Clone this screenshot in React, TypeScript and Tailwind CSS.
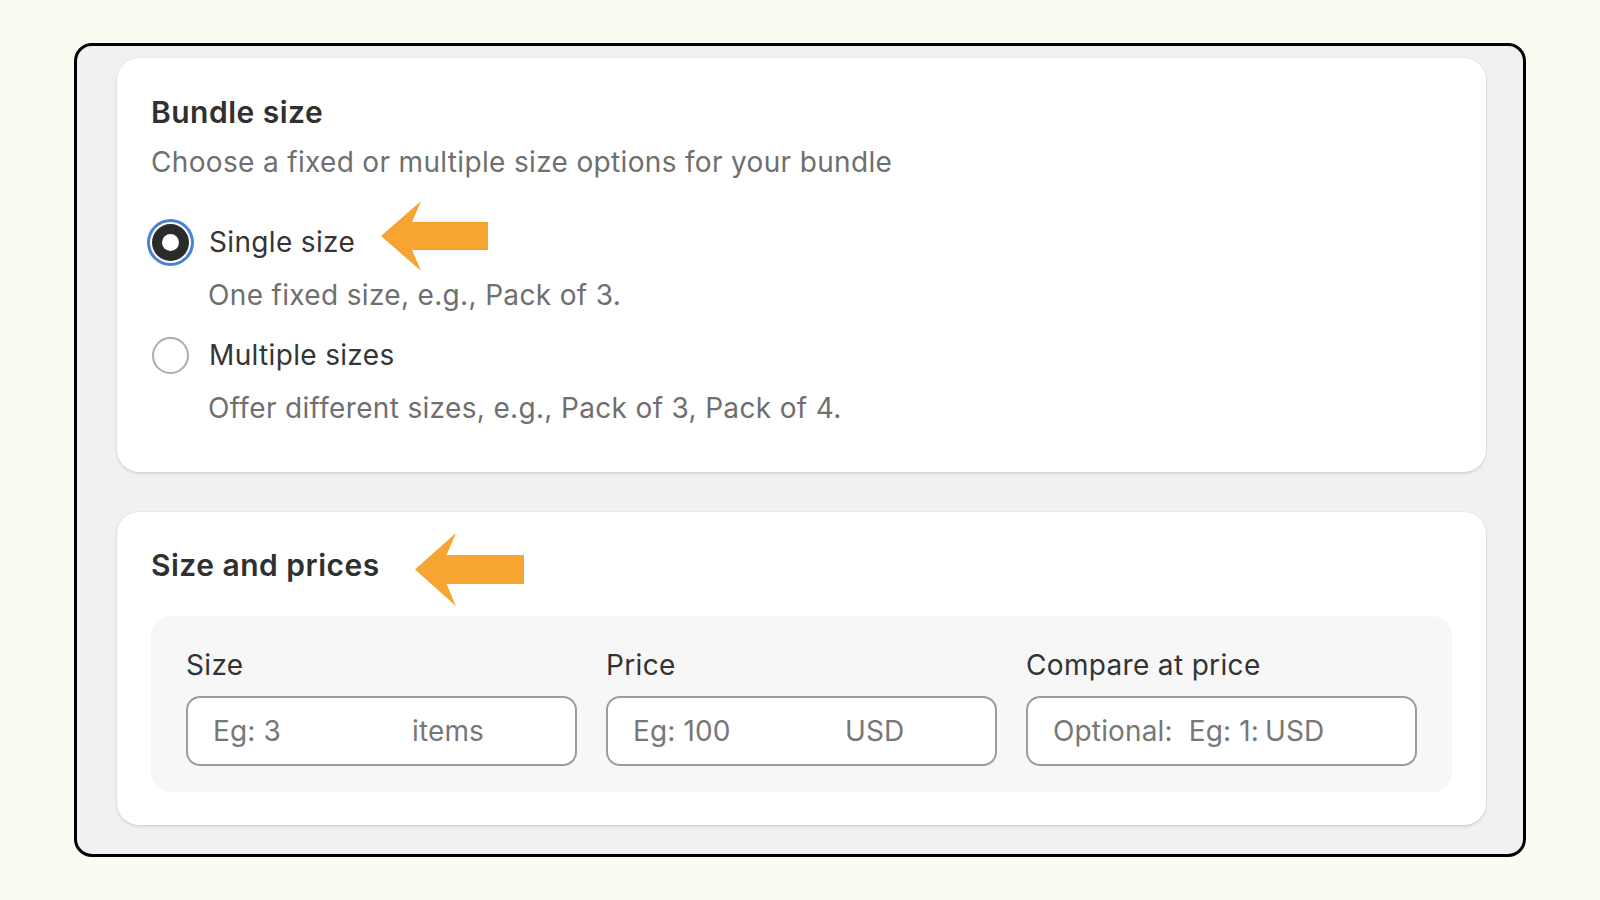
import React from "react";

function Arrow({ w, h, className }: { w: number; h: number; className: string }) {
  const tipY = h / 2;
  const barbX = w * 0.375;
  const notchX = w * 0.29;
  const shaftT = h * 0.3;
  const shaftB = h * 0.7;
  return (
    <svg className={className} width={w} height={h} viewBox={`0 0 ${w} ${h}`}>
      <polygon
        fill="#F6A532"
        points={`0,${tipY} ${barbX},0 ${notchX},${shaftT} ${w},${shaftT} ${w},${shaftB} ${notchX},${shaftB} ${barbX},${h}`}
      />
    </svg>
  );
}

export default function App() {
  const fields = [
    { label: "Size", ph: "Eg: 3", suffix: "items", w: 199 },
    { label: "Price", ph: "Eg: 100", suffix: "USD", w: 212 },
    { label: "Compare at price", ph: "Optional:  Eg: 1:", suffix: "USD", w: 212 },
  ];
  return (
    <div
      className="w-[1600px] h-[900px] bg-[#fbfbf2] pt-[43px] pl-[74px] overflow-hidden"
      style={{ fontFamily: "Inter, 'Noto Sans', sans-serif" }}
    >
      <div className="w-[1452px] h-[814px] border-[3px] border-black rounded-[18px] bg-[#f1f1f1] pt-[12px] pl-[40px]">
        {/* Card 1 */}
        <div className="relative w-[1369px] h-[414px] bg-white rounded-[22px] shadow-[0_2px_3px_rgba(0,0,0,0.10),0_0_0_1px_rgba(0,0,0,0.03)] pt-[36px] pl-[34px]">
          <div className="h-[36px] leading-[36px] text-[30px] tracking-[0.016em] font-semibold text-[#303030]">Bundle size</div>
          <div className="mt-[14px] h-[36px] leading-[36px] text-[28px] tracking-[0.012em] text-[#6f6f6f]">
            Choose a fixed or multiple size options for your bundle
          </div>
          <div className="mt-[40px] h-[44px] flex items-center">
            <div className="w-[37px] h-[37px] rounded-full bg-[#2b2b2b] flex items-center justify-center shadow-[0_0_0_2px_#ffffff,0_0_0_5px_#4a80d8] ml-[1px]">
              <div className="w-[17px] h-[17px] rounded-full bg-white" />
            </div>
            <div className="ml-[20px] text-[28px] tracking-[0.012em] leading-[36px] text-[#353535]">Single size</div>
          </div>
          <div className="mt-[13px] pl-[57px] h-[36px] leading-[36px] text-[28px] tracking-[0.012em] text-[#6f6f6f]">
            One fixed size, e.g., Pack of 3.
          </div>
          <div className="mt-[20px] h-[44px] flex items-center">
            <div className="w-[37px] h-[37px] rounded-full border-2 border-[#acacac] bg-white ml-[1px]" />
            <div className="ml-[20px] text-[28px] tracking-[0.012em] leading-[36px] text-[#353535]">Multiple sizes</div>
          </div>
          <div className="mt-[13px] pl-[57px] h-[36px] leading-[36px] text-[28px] tracking-[0.012em] text-[#6f6f6f]">
            Offer different sizes, e.g., Pack of 3, Pack of 4.
          </div>
          <Arrow w={107} h={70} className="absolute left-[264px] top-[143px]" />
        </div>

        {/* Card 2 */}
        <div className="relative mt-[40px] w-[1369px] h-[313px] bg-white rounded-[22px] shadow-[0_2px_3px_rgba(0,0,0,0.10),0_0_0_1px_rgba(0,0,0,0.03)] pt-[35px] px-[34px]">
          <div className="h-[36px] leading-[36px] text-[30px] tracking-[0.016em] font-semibold text-[#303030]">Size and prices</div>
          <div className="mt-[33px] h-[176px] bg-[#f7f7f7] rounded-[20px] pt-[31px] px-[35px] grid grid-cols-3 gap-x-[29px]">
            {fields.map((f) => (
              <div key={f.label} className="flex flex-col">
                <div className="h-[36px] leading-[36px] text-[28px] tracking-[0.012em] text-[#333333]">{f.label}</div>
                <div className="mt-[13px] h-[70px] rounded-[14px] border-2 border-[#9c9c9c] bg-white flex items-center pl-[25px]">
                  <div
                    className="text-[28px] tracking-[0.005em] text-[#777777] whitespace-pre overflow-hidden"
                    style={{ width: f.w }}
                  >
                    {f.ph}
                  </div>
                  <div className="text-[28px] tracking-[0.005em] text-[#777777]">{f.suffix}</div>
                </div>
              </div>
            ))}
          </div>
          <Arrow w={109} h={73} className="absolute left-[298px] top-[21px]" />
        </div>
      </div>
    </div>
  );
}
